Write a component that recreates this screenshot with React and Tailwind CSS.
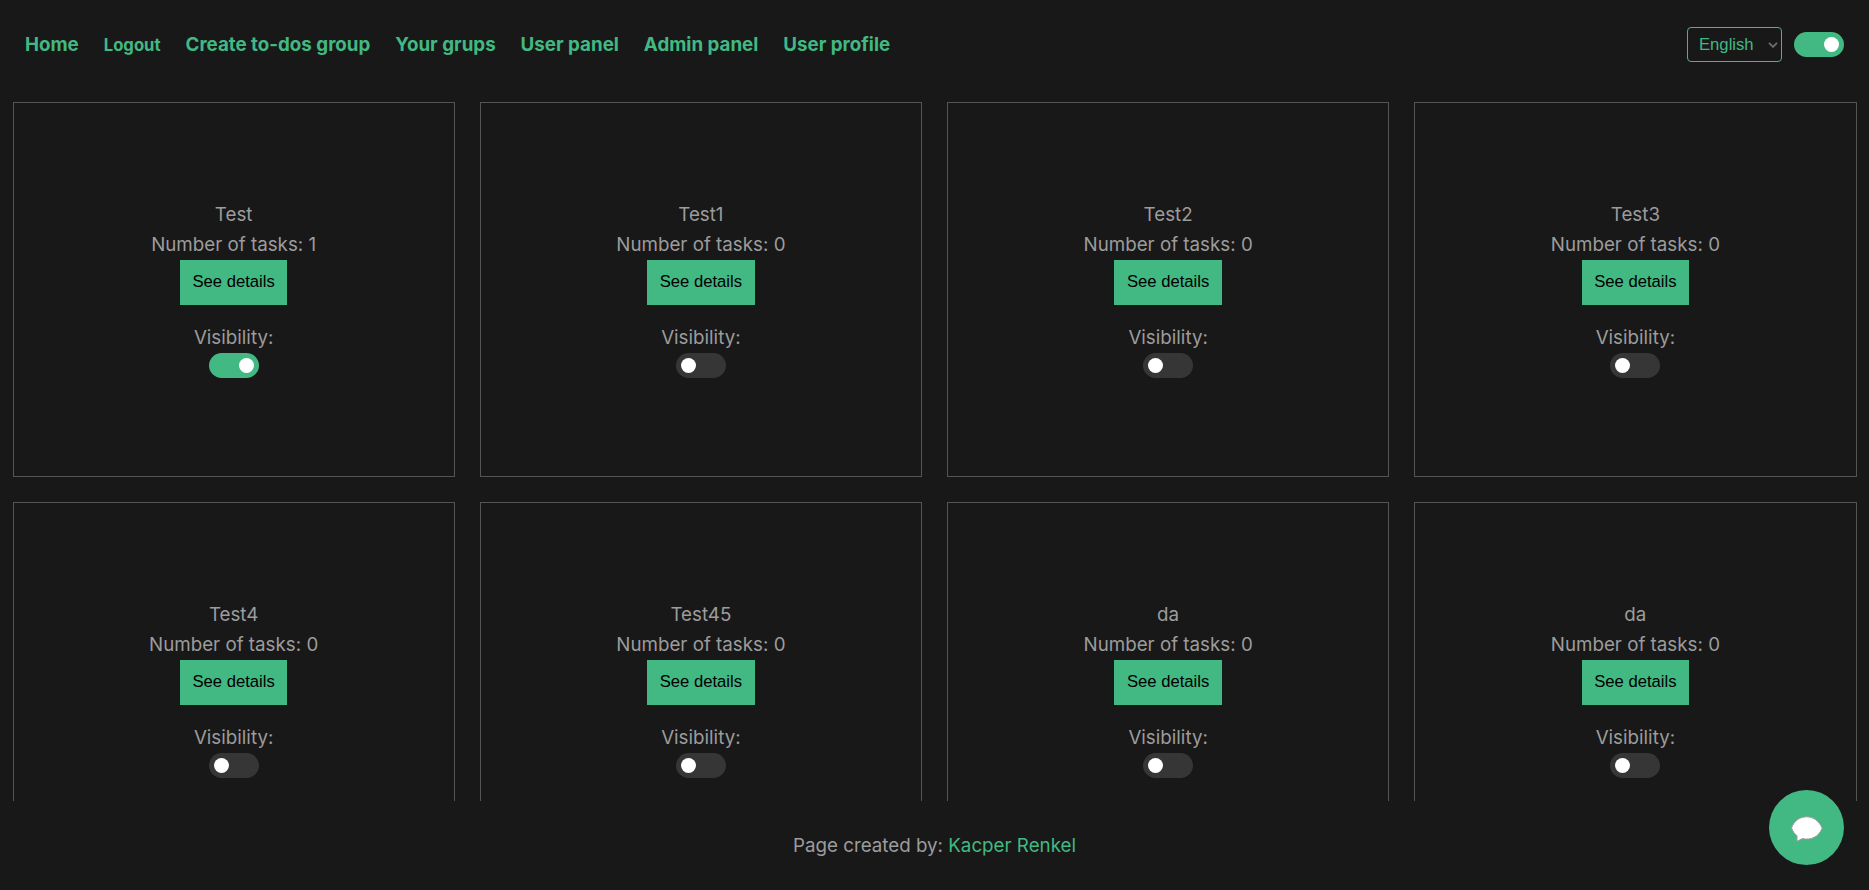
const LINKS = ['Home', 'Logout', 'Create to-dos group', 'Your grups', 'User panel', 'Admin panel', 'User profile'];

const GROUPS = [
  { name: 'Test', tasks: 1, visible: true },
  { name: 'Test1', tasks: 0 },
  { name: 'Test2', tasks: 0 },
  { name: 'Test3', tasks: 0 },
  { name: 'Test4', tasks: 0 },
  { name: 'Test45', tasks: 0 },
  { name: 'da', tasks: 0 },
  { name: 'da', tasks: 0 },
];

function Toggle({ on }) {
  return (
    <button
      role="switch"
      aria-checked={!!on}
      className={`flex h-[25px] w-[50px] items-center rounded-full px-[5px] ${on ? 'justify-end bg-[#42b883]' : 'justify-start bg-[#363636]'}`}
    >
      <span className="size-[15px] rounded-full bg-white" />
    </button>
  );
}

function Card({ group }) {
  return (
    <article className="flex h-[375px] flex-col items-center justify-center border border-[#545454] pb-[2px]">
      <p>{group.name}</p>
      <p>Number of tasks: {group.tasks}</p>
      <button className="h-[45px] bg-[#42b883] px-[12.5px] font-['Liberation_Sans',sans-serif] text-[16.67px] leading-5 text-black">
        See details
      </button>
      <p className="mt-[18px]">Visibility:</p>
      <Toggle on={group.visible} />
    </article>
  );
}

export default function App() {
  return (
    <div className="flex h-[890px] flex-col overflow-hidden bg-[#181818] font-[Inter,sans-serif] text-[18.75px] leading-[30px] text-[#9c9c9c]">
      <header className="flex h-[89px] shrink-0 items-center justify-between px-[25px]">
        <nav className="flex items-center gap-[24.95px] font-bold text-[#42b883]">
          {LINKS.map((label) =>
            label === 'Logout' ? (
              <button key={label} className="text-[16.67px]">{label}</button>
            ) : (
              <a key={label} href="#">{label}</a>
            ),
          )}
        </nav>
        <div className="flex items-center gap-3">
          <button className="flex h-[35px] w-[95px] items-center justify-between rounded-[4px] border border-[#42b883] pr-[3px] pl-[11px] font-['Liberation_Sans',sans-serif] text-[16.67px] text-[#42b883]">
            English
            <svg className="h-[6px] w-[10px]" viewBox="0 0 10 6" fill="none" stroke="#6f6f6f" strokeWidth="1.8">
              <path d="M1 .8l4 4 4-4" />
            </svg>
          </button>
          <Toggle on />
        </div>
      </header>
      <main className="h-[712px] shrink-0 overflow-hidden px-[12.5px] pt-[13px]">
        <div className="grid grid-cols-4 gap-[25px]">
          {GROUPS.map((group, i) => (
            <Card key={i} group={group} />
          ))}
        </div>
      </main>
      <footer className="flex h-[89px] shrink-0 items-center justify-center">
        <p>
          Page created by: <a href="#" className="text-[#42b883]">Kacper Renkel</a>
        </p>
      </footer>
      <button aria-label="Open chat" className="fixed right-[25px] bottom-[25px] flex size-[75px] items-center justify-center rounded-full bg-[#42b883]">
        <svg className="mt-[3px] h-[26px] w-[32px]" viewBox="0 0 32 26" fill="#fff" stroke="#9c9c9c" strokeWidth="1">
          <path d="M15.700 .8C8.500 .8 3 5 .6 11.800C1.500 15 3.500 18 6 19.700V25.300L11.500 22.600C20 24.500 27.500 21 31.200 12.200C28 5 22.500 .8 15.700 .8z" />
        </svg>
      </button>
    </div>
  );
}
